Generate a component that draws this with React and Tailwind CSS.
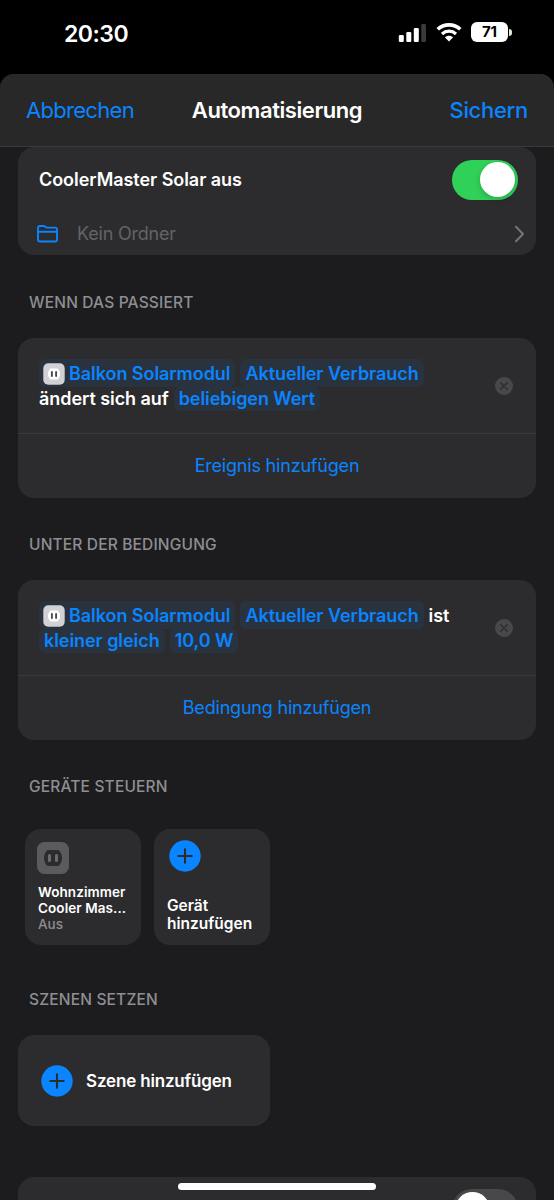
import { useState } from "react"

function Plus() {
  return (
    <svg viewBox="0 0 32 32" className="size-8 shrink-0">
      <circle cx="16" cy="16" r="15.7" fill="#0a84ff" />
      <path d="M16 9.3v13.4M9.3 16h13.4" stroke="#2c2c2e" strokeWidth="2.1" strokeLinecap="round" />
    </svg>
  )
}

function OutletIcon() {
  return (
    <svg viewBox="0 0 22 22" className="-ml-px size-[22px] shrink-0">
      <rect x="0.3" y="0.3" width="21.4" height="21.4" rx="5" fill="#d1d1d6" />
      <path d="M7.4 5.5h7.2c1.6 1.4 2.4 3.2 2.4 5.5s-.8 4.1-2.4 5.5H7.4C5.8 15.1 5 13.3 5 11s.8-4.1 2.4-5.5z" fill="#fff" />
      <path d="M8.9 9v4M13.1 9v4" stroke="#4a4a4c" strokeWidth="1.9" strokeLinecap="round" />
    </svg>
  )
}

function RemoveButton() {
  return (
    <button>
      <svg viewBox="0 0 18 18" className="size-[18px]">
        <circle cx="9" cy="9" r="9" fill="#48484b" />
        <path d="M5.7 5.7l6.6 6.6M12.3 5.7l-6.6 6.6" stroke="#2c2c2e" strokeWidth="1.4" strokeLinecap="round" />
      </svg>
    </button>
  )
}

function Chip({ children, className = "h-6" }) {
  return (
    <span className={`flex items-center rounded-[6px] bg-[#293340] px-[5px] text-[#0a84ff] ${className}`}>
      {children}
    </span>
  )
}

function Rule({ tail, secondLine, action }) {
  return (
    <section className="h-[160px] rounded-[16px] bg-[#2c2c2e]">
      <div className="flex h-24 items-center justify-between border-b border-[#3a3a3c] pl-[21px] pr-[23px]">
        <div className="pb-[2px] text-[18px] font-[570] leading-6 tracking-[-0.06px]">
          <div className="flex items-center gap-[5px]">
            <Chip className="h-7 pt-[3px]">
              <OutletIcon />
              <span className="ml-1">Balkon Solarmodul</span>
            </Chip>
            <Chip className="h-7 pt-[3px]">Aktueller Verbrauch</Chip>
            {tail && <span className="pt-[3px]">{tail}</span>}
          </div>
          <div className="flex items-center gap-[5px]">{secondLine}</div>
        </div>
        <RemoveButton />
      </div>
      <button className="flex h-[62px] w-full items-center justify-center text-[18px] tracking-[-0.2px] text-[#0a84ff]">
        {action}
      </button>
    </section>
  )
}

function Heading({ children }) {
  return <h2 className="pl-[11px] text-[15.5px] font-medium leading-5 tracking-[0.17px] text-[#8e8e93]">{children}</h2>
}

export default function App() {
  const [enabled, setEnabled] = useState(true)

  return (
    <div className="relative h-[1200px] w-full overflow-hidden bg-black font-['Inter',sans-serif] text-white">
      <div className="flex h-[74px] items-start justify-between pl-16 pr-[42px] pt-[22px]">
        <span className="text-[23px] font-semibold leading-6 tracking-[-0.5px]">20:30</span>
        <div className="flex items-center">
          <svg viewBox="0 0 28 18" className="mr-[10px] mt-px h-[18px] w-7">
            <rect x="0.8" y="11" width="5" height="7" rx="1.3" fill="#fff" />
            <rect x="8.3" y="8" width="5" height="10" rx="1.3" fill="#fff" />
            <rect x="15.8" y="4" width="5" height="14" rx="1.3" fill="#fff" />
            <rect x="23.2" y="0" width="4.8" height="18" rx="1.3" fill="#3a3a3a" />
          </svg>
          <svg viewBox="0 0 26 19" className="mr-[9px] h-[19px] w-[26px]" fill="none" stroke="#fff">
            <path d="M1.7 6.3C8 .4 18 .4 24.3 6.3" strokeWidth="3.6" />
            <path d="M6 10.9c4-3.6 10-3.6 14 0" strokeWidth="3.3" />
            <path d="M13 18.5l-4.2-4.2c2.4-2.1 6-2.1 8.4 0z" fill="#fff" stroke="none" />
          </svg>
          <span className="flex h-5 w-[37px] items-center justify-center rounded-[6px] bg-white text-[15px] font-bold text-black">71</span>
          <span className="ml-px h-[7px] w-[3px] rounded-r-full bg-[#e5e5e5]" />
        </div>
      </div>

      <div className="h-[1126px] rounded-t-[14px] bg-[#1c1c1e]">
        <header className="flex h-[73px] items-center justify-between whitespace-nowrap rounded-t-[14px] border-b border-[#39393b] bg-[#282828] px-[26px] text-[22px]">
          <button className="w-[120px] text-left tracking-[-0.7px] text-[#0a84ff]">Abbrechen</button>
          <h1 className="font-semibold tracking-[-0.42px]">Automatisierung</h1>
          <button className="w-[120px] text-right font-medium tracking-[-0.3px] text-[#0a84ff]">Sichern</button>
        </header>

        <main className="px-[18px]">
          <section className="h-[108px] rounded-[16px] bg-[#2c2c2e]">
            <div className="flex h-[65px] items-center justify-between pl-[21px] pr-[18px]">
              <span className="text-[18px] font-[570] tracking-[-0.05px]">CoolerMaster Solar aus</span>
              <button
                onClick={() => setEnabled(!enabled)}
                className={`flex h-10 w-[66px] items-center rounded-full p-[3px] ${enabled ? "justify-end bg-[#30d158]" : "bg-[#48484a]"}`}
              >
                <span className="size-[35px] shrink-0 rounded-full bg-white shadow-[0_2px_6px_rgba(0,0,0,0.2)]" />
              </button>
            </div>
            <div className="flex h-[43px] items-start pl-[19px] pr-[11px] pt-[9px]">
              <svg viewBox="0 0 21 18" className="mt-1 h-[18px] w-[21px]" fill="none" stroke="#0a84ff" strokeWidth="1.9" strokeLinejoin="round">
                <path d="M1 3q0-2 2-2h3.6q.8 0 1.4.5l.9.7q.5.4 1.3.4H18q2 0 2 2V14.5q0 2-2 2H3q-2 0-2-2zM1 6.7h19" />
              </svg>
              <span className="ml-[19px] mt-px text-[18px] leading-6 tracking-[-0.2px] text-[#636366]">Kein Ordner</span>
              <svg viewBox="0 0 11 18" className="ml-auto mt-1 h-[18px] w-[11px]" fill="none" stroke="#747478" strokeWidth="2" strokeLinecap="round" strokeLinejoin="round">
                <path d="M2 1.8L9 9l-7 7.2" />
              </svg>
            </div>
          </section>

          <div className="pb-[25px] pt-[38px]"><Heading>WENN DAS PASSIERT</Heading></div>
          <Rule
            secondLine={<><span>ändert sich auf</span><Chip>beliebigen Wert</Chip></>}
            action="Ereignis hinzufügen"
          />

          <div className="pb-[25px] pt-[37px]"><Heading>UNTER DER BEDINGUNG</Heading></div>
          <Rule
            tail="ist"
            secondLine={<><Chip>kleiner gleich</Chip><Chip>10,0 W</Chip></>}
            action="Bedingung hinzufügen"
          />

          <div className="pb-8 pt-[37px]"><Heading>GERÄTE STEUERN</Heading></div>
          <div className="flex gap-[13px] pl-[7px]">
            <div className="size-[116px] rounded-[16px] bg-[#2c2c2e] pl-[13px] pt-[13px]">
              <svg viewBox="0 0 32 32" className="-ml-px size-8">
                <rect width="32" height="32" rx="7.5" fill="#5b5b5d" />
                <path d="M10.5 8h11c2.3 2 3.5 4.7 3.5 8s-1.2 6-3.5 8h-11C8.2 22 7 19.3 7 16s1.2-6 3.5-8z" fill="#2c2c2e" />
                <path d="M12.5 13.5v5M19.5 13.5v5" stroke="#6c6c6e" strokeWidth="3" strokeLinecap="round" />
              </svg>
              <p className="mt-[10px] whitespace-nowrap text-[13.5px] font-[570] leading-4 tracking-[0.08px]">Wohnzimmer<br />Cooler Mas...</p>
              <p className="text-[13.5px] font-medium leading-4 text-[#8e8e93]">Aus</p>
            </div>
            <button className="flex size-[116px] flex-col justify-between rounded-[16px] bg-[#2c2c2e] pb-3 pl-[13px] pt-[11px] text-left">
              <span className="pl-[2px]"><Plus /></span>
              <span className="text-[15.5px] font-[570] leading-[18px]">Gerät<br />hinzufügen</span>
            </button>
          </div>

          <div className="pb-[25px] pt-[45px]"><Heading>SZENEN SETZEN</Heading></div>
          <button className="flex h-[91px] w-[252px] items-center rounded-[16px] bg-[#2c2c2e] pl-[23px]">
            <Plus />
            <span className="ml-[13px] mt-[2px] text-[17px] font-[570] tracking-[-0.17px]">Szene hinzufügen</span>
          </button>

          <section className="mt-[51px] flex h-20 items-start justify-end rounded-[16px] bg-[#2c2c2e] pr-[18px] pt-3">
            <button className="flex h-10 w-[66px] items-center rounded-full bg-[#48484a] p-[2.5px]">
              <span className="size-[35px] rounded-full bg-white" />
            </button>
          </section>
        </main>
      </div>

      <div className="absolute bottom-[10px] left-[178px] h-[7px] w-[198px] rounded-full bg-white" />
    </div>
  )
}
